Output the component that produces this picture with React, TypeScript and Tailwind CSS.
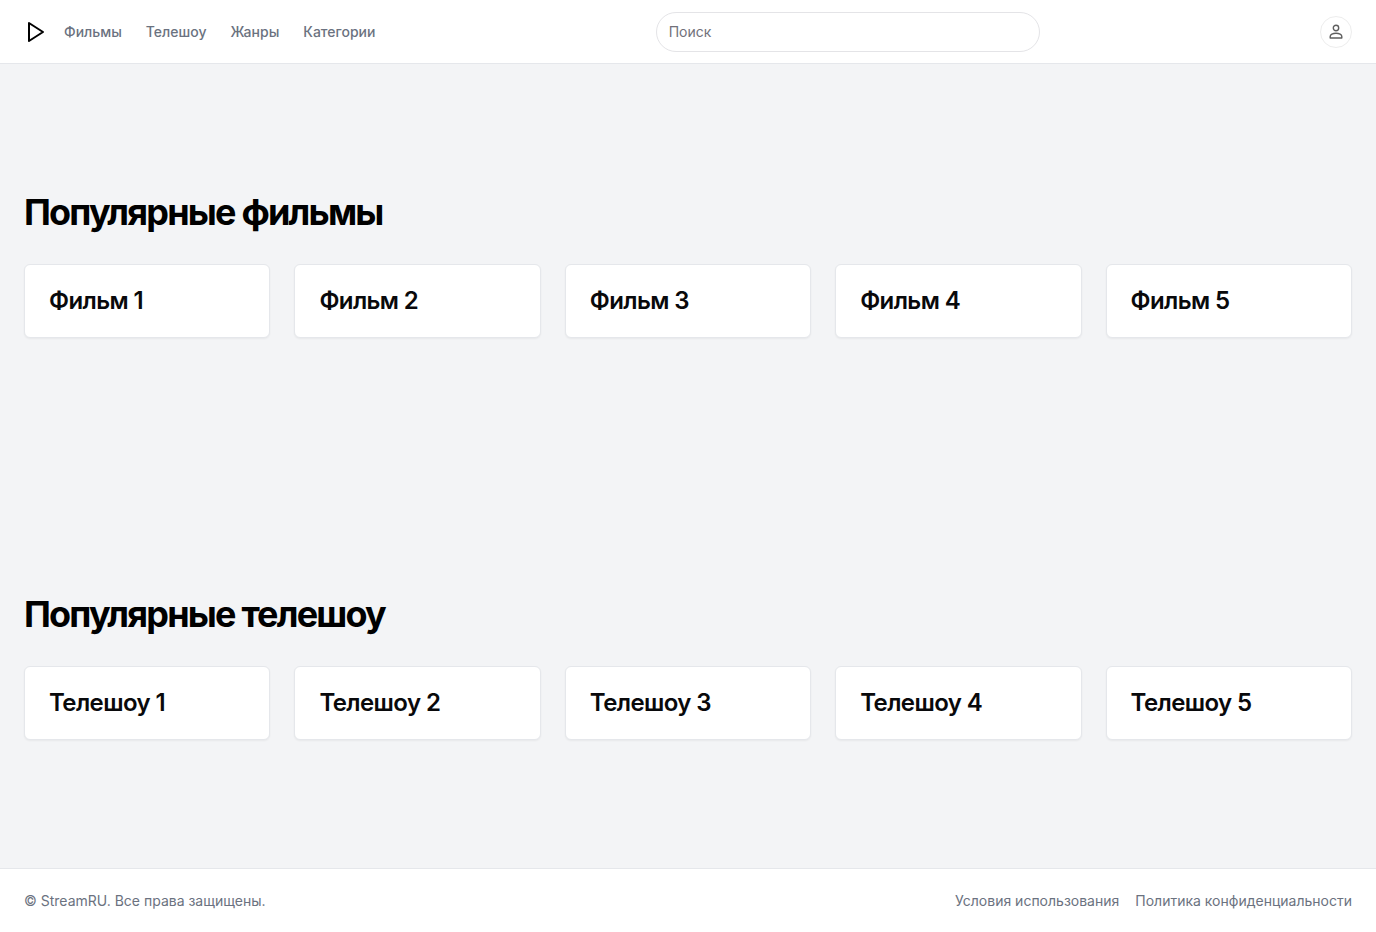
const navItems = ["Фильмы", "Телешоу", "Жанры", "Категории"];
const footerItems = ["Условия использования", "Политика конфиденциальности"];
const sections = [
  { title: "Популярные фильмы", item: "Фильм" },
  { title: "Популярные телешоу", item: "Телешоу" },
];

function Section({ title, item }: { title: string; item: string }) {
  return (
    <section className="w-full py-12 md:py-24 lg:py-32">
      <div className="grid gap-8 px-4 md:px-6">
        <h2 className="text-3xl font-bold tracking-tighter md:text-4xl">{title}</h2>
        <div className="grid grid-cols-1 gap-6 sm:grid-cols-2 md:grid-cols-3 lg:grid-cols-5">
          {[1, 2, 3, 4, 5].map((n) => (
            <article key={n} className="rounded-md border border-[#e5e7eb] bg-white p-6 shadow-xs">
              <h3 className="text-2xl leading-6 font-semibold tracking-tight text-[#09090b]">
                {item} {n}
              </h3>
            </article>
          ))}
        </div>
      </div>
    </section>
  );
}

export default function App() {
  return (
    <div className="flex min-h-screen flex-col bg-white font-[Inter,sans-serif] text-black">
      <header className="flex h-16 shrink-0 items-center justify-between border-b border-[#e5e7eb] px-4 md:px-6">
        <nav className="flex items-center gap-6 text-sm font-medium text-[#6b7280]">
          <a href="#" aria-label="StreamRU" className="-mr-2 text-black">
            <svg className="size-6" viewBox="0 0 24 24" fill="none" stroke="currentColor" strokeWidth="2" strokeLinejoin="round">
              <polygon points="5 3 19 12 5 21" />
            </svg>
          </a>
          {navItems.map((t) => (
            <a key={t} href="#">{t}</a>
          ))}
        </nav>
        <input
          type="search"
          aria-label="Поиск"
          placeholder="Поиск"
          className="h-10 w-96 rounded-full border border-[#e4e4e7] px-3 text-sm placeholder:text-[#71717a]"
        />
        <button type="button" aria-label="Профиль" className="flex size-8 items-center justify-center rounded-full border border-[#ededed] text-[#5f5f5f]">
          <svg className="size-4" viewBox="0 0 16 16" fill="none" stroke="currentColor" strokeWidth="1.4">
            <circle cx="8" cy="4" r="2.7" />
            <path d="M2.2 14V12.6C2.2 10.8 4.8 9.2 8 9.2S13.8 10.8 13.8 12.6V14Z" strokeLinejoin="round" />
          </svg>
        </button>
      </header>
      <main className="flex-1 bg-gray-100">
        {sections.map((s) => (
          <Section key={s.item} {...s} />
        ))}
      </main>
      <footer className="flex min-h-16 shrink-0 items-center justify-between border-t border-[#e5e7eb] px-4 text-sm text-[#6b7280] md:px-6">
        <p>© StreamRU. Все права защищены.</p>
        <nav className="flex gap-4">
          {footerItems.map((t) => (
            <a key={t} href="#">{t}</a>
          ))}
        </nav>
      </footer>
    </div>
  );
}
